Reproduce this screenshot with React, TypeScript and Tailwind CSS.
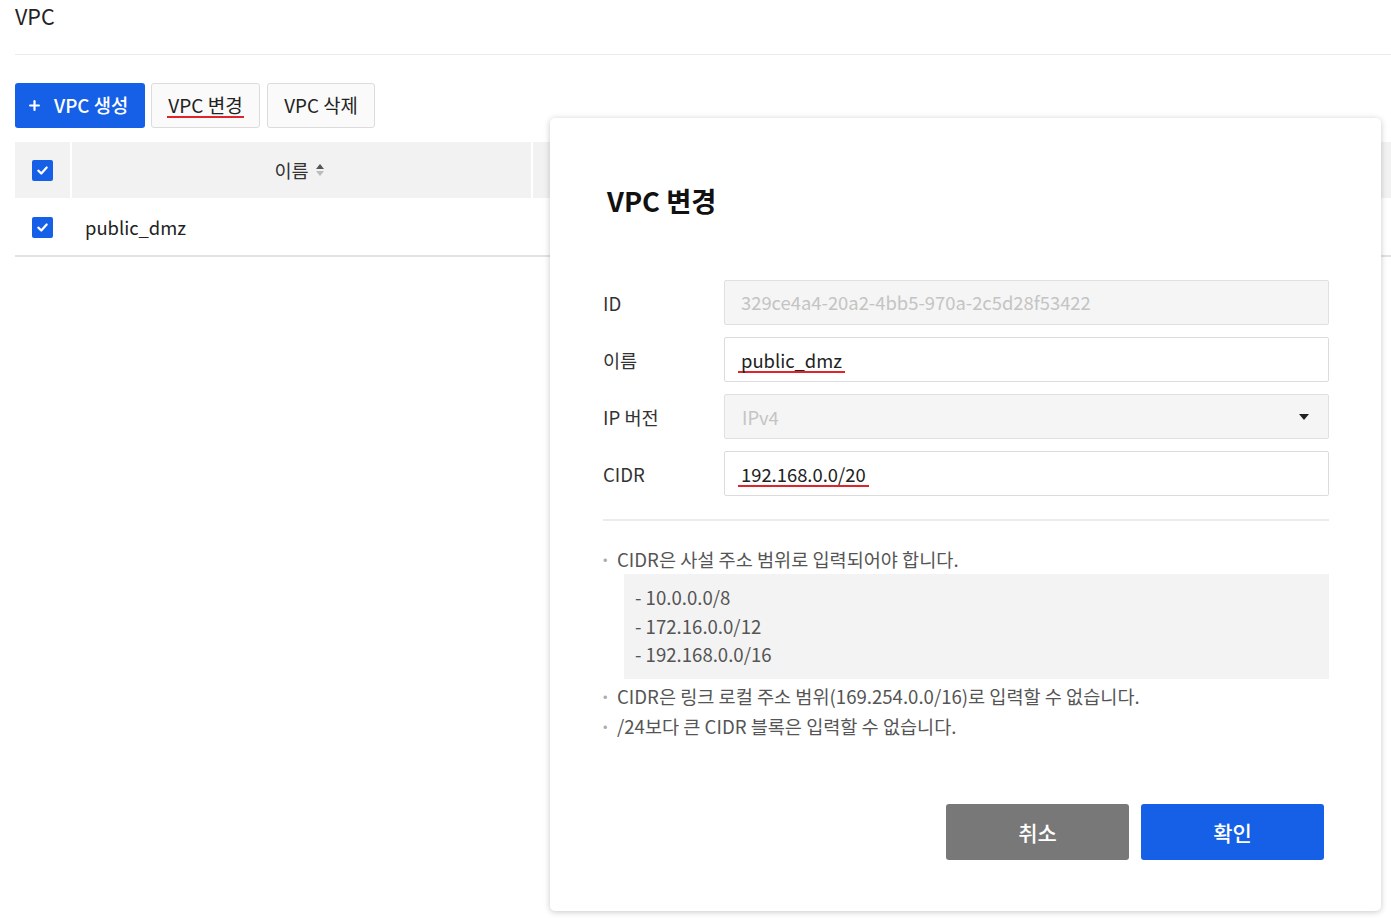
import { Plus } from "lucide-react";

const font = { fontFamily: '"Noto Sans CJK KR", "Noto Sans", sans-serif' };

function Check() {
  return (
    <span className="w-[21px] h-[21px] rounded-[2px] bg-[#1660e8] flex items-center justify-center">
      <svg width="13" height="13" viewBox="0 0 14 14" fill="none">
        <path d="M2.5 7.2 L5.7 10.2 L11.5 3.8" stroke="white" strokeWidth="2.4" strokeLinecap="round" strokeLinejoin="round" />
      </svg>
    </span>
  );
}

function Row({ label, children }: { label: string; children: React.ReactNode }) {
  return (
    <div className="flex items-center h-[45px]">
      <div className="w-[121px] text-[18.6px] text-[#333]">{label}</div>
      {children}
    </div>
  );
}

export default function App() {
  return (
    <div className="relative w-[1391px] h-[918px] bg-white overflow-hidden text-[#222]" style={font}>
      <div className="pl-[15px]">
        <div className="h-[55px] border-b border-[#eaeaea] flex items-start text-[21.5px]">VPC</div>

        {/* toolbar */}
        <div className="flex items-center gap-[6px] mt-[28px] h-[45px]">
          <button className="h-[45px] w-[130px] rounded-[3px] bg-[#1660e8] text-white text-[18.8px] font-medium flex items-center pl-[12px] gap-[12px]">
            <Plus className="w-[15px] h-[15px]" strokeWidth={3.5} />
            <span>VPC 생성</span>
          </button>
          <button className="h-[45px] w-[109px] rounded-[3px] border border-[#dcdcdc] bg-[#fafafa] text-[19px] text-[#222] flex items-center justify-center">
            <span className="border-b-2 border-[#e0242b] px-[1px] leading-[22px]">VPC 변경</span>
          </button>
          <button className="h-[45px] w-[108px] ml-[1px] rounded-[3px] border border-[#dcdcdc] bg-[#fafafa] text-[18.8px] text-[#222] flex items-center justify-center">
            VPC 삭제
          </button>
        </div>

        {/* table */}
        <div className="mt-[14px] border-b-2 border-[#e2e2e2]">
          <div className="flex h-[56px] gap-[2px]">
            <div className="w-[55px] bg-[#f2f2f2] flex items-center justify-center"><Check /></div>
            <div className="w-[459px] bg-[#f2f2f2] flex items-center justify-center gap-[6px] text-[18.6px] text-[#333] pr-[4px]">
              <span>이름</span>
              <svg width="10" height="16" viewBox="0 0 10 16">
                <path d="M5 2 L9 7 L1 7 Z" fill="#555" />
                <path d="M5 14 L9 9 L1 9 Z" fill="#bbb" />
              </svg>
            </div>
            <div className="flex-1 bg-[#f2f2f2]" />
          </div>
          <div className="flex h-[57px] items-center pt-[2px]">
            <div className="w-[55px] flex justify-center"><Check /></div>
            <div className="pl-[15px] text-[18.4px] text-[#222]">public_dmz</div>
          </div>
        </div>
      </div>

      {/* modal */}
      <div className="absolute left-[550px] top-[118px] w-[831px] h-[793px] bg-white rounded-[5px] shadow-[0_1px_6px_rgba(0,0,0,0.22)] flex flex-col pl-[53px] pr-[52px]">
        <div className="mt-[64px] text-[27.3px] font-bold leading-[36px] text-[#111] pl-[4px]">VPC 변경</div>

        <div className="mt-[62px] flex flex-col gap-[12px]">
          <Row label="ID">
            <div className="flex-1 h-full rounded-[2px] border border-[#e0e0e0] bg-[#f5f5f5] flex items-center pl-[16px] text-[18.4px] text-[#c4c4c4]">
              329ce4a4-20a2-4bb5-970a-2c5d28f53422
            </div>
          </Row>
          <Row label="이름">
            <div className="flex-1 h-full rounded-[2px] border border-[#dcdcdc] bg-white flex items-center pl-[13px] text-[18.4px] text-[#222]">
              <span className="border-b-2 border-[#e0242b] px-[3px] leading-[22px] pt-[2px]">public_dmz</span>
            </div>
          </Row>
          <Row label="IP 버전">
            <div className="flex-1 h-full rounded-[2px] border border-[#e0e0e0] bg-[#f5f5f5] flex items-center justify-between pl-[17px] pr-[18px] text-[18.4px] text-[#c4c4c4]">
              <span className="pt-[2px]">IPv4</span>
              <svg width="12" height="8" viewBox="0 0 12 8"><path d="M1 1 L11 1 L6 7 Z" fill="#222" /></svg>
            </div>
          </Row>
          <Row label="CIDR">
            <div className="flex-1 h-full rounded-[2px] border border-[#dcdcdc] bg-white flex items-center pl-[13px] text-[18.4px] text-[#222]">
              <span className="border-b-2 border-[#e0242b] px-[3px] leading-[22px] pt-[2px]">192.168.0.0/20</span>
            </div>
          </Row>
        </div>

        <div className="mt-[23px] border-t-2 border-[#ececec]" />

        <div className="mt-[24px] text-[18.6px] text-[#555] leading-[28px]">
          <div className="flex">
            <span className="w-[14px] text-[#aaa] text-[13px]">•</span>
            <span>CIDR은 사설 주소 범위로 입력되어야 합니다.</span>
          </div>
          <div className="ml-[21px] mt-[1px] bg-[#f3f3f3] pl-[11px] pt-[9px] pb-[10px] leading-[28.5px]">
            <div>- 10.0.0.0/8</div>
            <div>- 172.16.0.0/12</div>
            <div>- 192.168.0.0/16</div>
          </div>
          <div className="flex mt-[2px] leading-[30px]">
            <span className="w-[14px] text-[#aaa] text-[13px]">•</span>
            <span>CIDR은 링크 로컬 주소 범위(169.254.0.0/16)로 입력할 수 없습니다.</span>
          </div>
          <div className="flex leading-[30px]">
            <span className="w-[14px] text-[#aaa] text-[13px]">•</span>
            <span>/24보다 큰 CIDR 블록은 입력할 수 없습니다.</span>
          </div>
        </div>

        <div className="mt-auto mb-[51px] flex justify-end gap-[12px] pr-[5px]">
          <button className="w-[183px] h-[56px] rounded-[3px] bg-[#787878] text-white text-[21px] font-medium pt-[2px]">취소</button>
          <button className="w-[183px] h-[56px] rounded-[3px] bg-[#1660e8] text-white text-[21px] font-medium pt-[2px]">확인</button>
        </div>
      </div>
    </div>
  );
}
